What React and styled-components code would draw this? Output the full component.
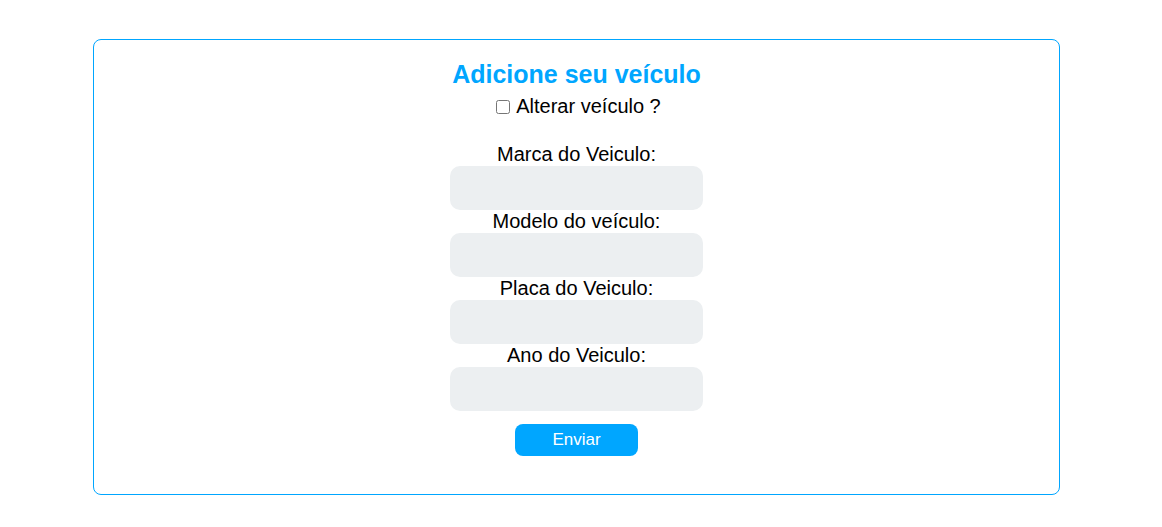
import React from "react";
import styled, { createGlobalStyle } from "styled-components";

const GlobalStyle = createGlobalStyle`
  body {
    margin: 0;
    background: #ffffff;
    font-family: "Liberation Sans", Arial, sans-serif;
  }
`;

const Page = styled.div`
  padding: 39px 0 30px 93px;
`;

const Card = styled.section`
  width: 967px;
  box-sizing: border-box;
  border: 1px solid #00a6ff;
  border-radius: 8px;
  padding: 20px 0 38px;
  display: flex;
  flex-direction: column;
  align-items: center;
`;

const Title = styled.h2`
  margin: 0;
  font-size: 25px;
  line-height: 29px;
  font-weight: bold;
  color: #00a6ff;
`;

const CheckRow = styled.label`
  margin-top: 6px;
  font-size: 20px;
  line-height: 23px;
  color: #000;
  display: flex;
  align-items: center;

  input {
    width: 14px;
    height: 14px;
    margin: 0 6px 0 4px;
  }
`;

const Form = styled.form`
  margin-top: 25px;
  display: flex;
  flex-direction: column;
  align-items: center;
`;

const Label = styled.label`
  font-size: 20px;
  line-height: 23px;
  color: #000;
`;

const Input = styled.input`
  width: 253px;
  height: 44px;
  box-sizing: border-box;
  border: none;
  border-radius: 10px;
  background: #eceff1;
  outline: none;
  font-size: 16px;
  padding: 0 10px;
`;

const Button = styled.button`
  margin-top: 13px;
  width: 123px;
  height: 32px;
  border: none;
  border-radius: 8px;
  background: #00a6ff;
  color: #ffffff;
  font-family: "Liberation Sans", Arial, sans-serif;
  font-size: 17px;
  cursor: pointer;
`;

const fields = [
  { id: "marca", label: "Marca do Veiculo:" },
  { id: "modelo", label: "Modelo do veículo:" },
  { id: "placa", label: "Placa do Veiculo:" },
  { id: "ano", label: "Ano do Veiculo:" },
];

export default function App() {
  return (
    <>
      <GlobalStyle />
      <Page>
        <Card>
          <Title>Adicione seu veículo</Title>
          <CheckRow>
            <input type="checkbox" />
            Alterar veículo ?
          </CheckRow>
          <Form onSubmit={(e) => e.preventDefault()}>
            {fields.map(({ id, label }) => (
              <React.Fragment key={id}>
                <Label htmlFor={id}>{label}</Label>
                <Input id={id} type="text" />
              </React.Fragment>
            ))}
            <Button type="submit">Enviar</Button>
          </Form>
        </Card>
      </Page>
    </>
  );
}
